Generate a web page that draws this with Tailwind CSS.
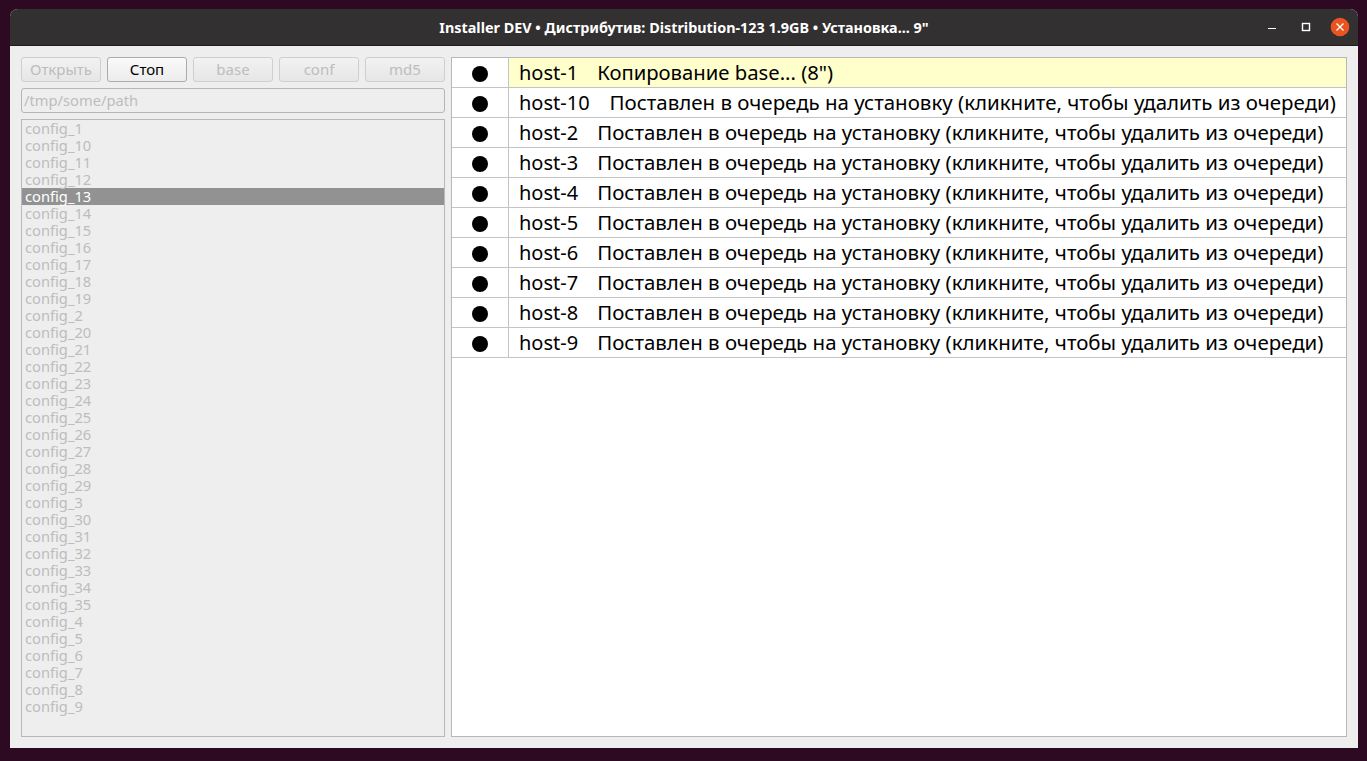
<!doctype html>
<html><head><meta charset="utf-8"><script src="https://cdn.jsdelivr.net/npm/@tailwindcss/browser@4"></script></head>
<body class="m-0 overflow-hidden">
<div class="w-[1367px] h-[761px] bg-[#2e0a22] pl-[10px] pt-[9px] font-['Noto_Sans',sans-serif]">
<div class="w-[1348px] h-[739px] flex flex-col bg-[#eeeeee] rounded-t-[8px] overflow-hidden">
 <div class="h-[37px] shrink-0 bg-[#323030] border-b border-[#1f1d1d] flex items-center relative">
  <div class="w-full text-center text-white font-bold text-[14.4px] mt-[2px]">Installer DEV • Дистрибутив: Distribution-123 1.9GB • Установка... 9"</div>
  <div class="absolute right-[8px] top-[8px] flex items-center">
   <svg width="100" height="20" viewBox="0 0 100 20"><path d="M18 11.5h8" stroke="#fff" stroke-width="1"/><rect x="52.5" y="6.5" width="7" height="7" fill="none" stroke="#fff" stroke-width="1.4"/><circle cx="90" cy="10" r="9.3" fill="#e95420"/><path d="M86.5 6.5l7 7M93.5 6.5l-7 7" stroke="#fff" stroke-width="1.3"/></svg>
  </div>
 </div>
 <div class="flex-1 flex gap-[6px] pl-[11px] pr-[11px] pt-[11px] pb-[11px]">
  <div class="w-[424px] flex flex-col gap-[6px]">
   <div class="flex gap-[6px] text-[15px] leading-none">
    <div class="w-[80px] h-[25px] flex items-center justify-center rounded-[3px] border border-[#cfcfcf] bg-linear-to-b from-[#f2f2f2] to-[#e6e6e6] text-[#bdbdbd]">Открыть</div>
    <div class="w-[80px] h-[25px] flex items-center justify-center rounded-[3px] border border-[#ababab] bg-linear-to-b from-[#fafafa] to-[#ececec] text-black">Стоп</div>
    <div class="w-[80px] h-[25px] flex items-center justify-center rounded-[3px] border border-[#cfcfcf] bg-linear-to-b from-[#f2f2f2] to-[#e6e6e6] text-[#bdbdbd]">base</div>
    <div class="w-[80px] h-[25px] flex items-center justify-center rounded-[3px] border border-[#cfcfcf] bg-linear-to-b from-[#f2f2f2] to-[#e6e6e6] text-[#bdbdbd]">conf</div>
    <div class="w-[80px] h-[25px] flex items-center justify-center rounded-[3px] border border-[#cfcfcf] bg-linear-to-b from-[#f2f2f2] to-[#e6e6e6] text-[#bdbdbd]">md5</div>
   </div>
   <div class="h-[25px] flex items-center rounded-[3px] border border-[#b5b5b5] px-[2px] text-[14.7px] text-[#bdbdbd] bg-[#eeeeee]">/tmp/some/path</div>
   <div class="flex-1 border border-[#b8b8b8] text-[14.7px] leading-[17px] text-[#bdbdbd]">
    <div class="h-[17px] px-[3px]">config_1</div><div class="h-[17px] px-[3px]">config_10</div><div class="h-[17px] px-[3px]">config_11</div><div class="h-[17px] px-[3px]">config_12</div>
    <div class="h-[17px] px-[3px] bg-[#929292] text-white">config_13</div>
    <div class="h-[17px] px-[3px]">config_14</div><div class="h-[17px] px-[3px]">config_15</div><div class="h-[17px] px-[3px]">config_16</div><div class="h-[17px] px-[3px]">config_17</div><div class="h-[17px] px-[3px]">config_18</div><div class="h-[17px] px-[3px]">config_19</div><div class="h-[17px] px-[3px]">config_2</div><div class="h-[17px] px-[3px]">config_20</div><div class="h-[17px] px-[3px]">config_21</div><div class="h-[17px] px-[3px]">config_22</div><div class="h-[17px] px-[3px]">config_23</div><div class="h-[17px] px-[3px]">config_24</div><div class="h-[17px] px-[3px]">config_25</div><div class="h-[17px] px-[3px]">config_26</div><div class="h-[17px] px-[3px]">config_27</div><div class="h-[17px] px-[3px]">config_28</div><div class="h-[17px] px-[3px]">config_29</div><div class="h-[17px] px-[3px]">config_3</div><div class="h-[17px] px-[3px]">config_30</div><div class="h-[17px] px-[3px]">config_31</div><div class="h-[17px] px-[3px]">config_32</div><div class="h-[17px] px-[3px]">config_33</div><div class="h-[17px] px-[3px]">config_34</div><div class="h-[17px] px-[3px]">config_35</div><div class="h-[17px] px-[3px]">config_4</div><div class="h-[17px] px-[3px]">config_5</div><div class="h-[17px] px-[3px]">config_6</div><div class="h-[17px] px-[3px]">config_7</div><div class="h-[17px] px-[3px]">config_8</div><div class="h-[17px] px-[3px]">config_9</div>
   </div>
  </div>
  <div class="w-[896px] bg-white border border-[#b8b8b8] text-[20px] leading-none text-black">
   <div class="h-[30px] flex border-b border-[#c4c4c4]"><div class="w-[57px] border-r border-[#c4c4c4] flex items-center justify-center"><div class="w-[16px] h-[16px] rounded-full bg-black mt-[3px]"></div></div><div class="flex-1 bg-[#ffffcc] flex items-center pl-[10px] gap-[19px] whitespace-nowrap"><span>host-1</span><span class="text-[20.25px]">Копирование base... (8")</span></div></div>
   <div class="h-[30px] flex border-b border-[#c4c4c4]"><div class="w-[57px] border-r border-[#c4c4c4] flex items-center justify-center"><div class="w-[16px] h-[16px] rounded-full bg-black mt-[3px]"></div></div><div class="flex-1 flex items-center pl-[10px] gap-[20px] whitespace-nowrap"><span>host-10</span><span class="text-[20.48px]">Поставлен в очередь на установку (кликните, чтобы удалить из очереди)</span></div></div>
   <div class="h-[30px] flex border-b border-[#c4c4c4]"><div class="w-[57px] border-r border-[#c4c4c4] flex items-center justify-center"><div class="w-[16px] h-[16px] rounded-full bg-black mt-[3px]"></div></div><div class="flex-1 flex items-center pl-[10px] gap-[19px] whitespace-nowrap"><span>host-2</span><span class="text-[20.48px]">Поставлен в очередь на установку (кликните, чтобы удалить из очереди)</span></div></div>
   <div class="h-[30px] flex border-b border-[#c4c4c4]"><div class="w-[57px] border-r border-[#c4c4c4] flex items-center justify-center"><div class="w-[16px] h-[16px] rounded-full bg-black mt-[3px]"></div></div><div class="flex-1 flex items-center pl-[10px] gap-[19px] whitespace-nowrap"><span>host-3</span><span class="text-[20.48px]">Поставлен в очередь на установку (кликните, чтобы удалить из очереди)</span></div></div>
   <div class="h-[30px] flex border-b border-[#c4c4c4]"><div class="w-[57px] border-r border-[#c4c4c4] flex items-center justify-center"><div class="w-[16px] h-[16px] rounded-full bg-black mt-[3px]"></div></div><div class="flex-1 flex items-center pl-[10px] gap-[19px] whitespace-nowrap"><span>host-4</span><span class="text-[20.48px]">Поставлен в очередь на установку (кликните, чтобы удалить из очереди)</span></div></div>
   <div class="h-[30px] flex border-b border-[#c4c4c4]"><div class="w-[57px] border-r border-[#c4c4c4] flex items-center justify-center"><div class="w-[16px] h-[16px] rounded-full bg-black mt-[3px]"></div></div><div class="flex-1 flex items-center pl-[10px] gap-[19px] whitespace-nowrap"><span>host-5</span><span class="text-[20.48px]">Поставлен в очередь на установку (кликните, чтобы удалить из очереди)</span></div></div>
   <div class="h-[30px] flex border-b border-[#c4c4c4]"><div class="w-[57px] border-r border-[#c4c4c4] flex items-center justify-center"><div class="w-[16px] h-[16px] rounded-full bg-black mt-[3px]"></div></div><div class="flex-1 flex items-center pl-[10px] gap-[19px] whitespace-nowrap"><span>host-6</span><span class="text-[20.48px]">Поставлен в очередь на установку (кликните, чтобы удалить из очереди)</span></div></div>
   <div class="h-[30px] flex border-b border-[#c4c4c4]"><div class="w-[57px] border-r border-[#c4c4c4] flex items-center justify-center"><div class="w-[16px] h-[16px] rounded-full bg-black mt-[3px]"></div></div><div class="flex-1 flex items-center pl-[10px] gap-[19px] whitespace-nowrap"><span>host-7</span><span class="text-[20.48px]">Поставлен в очередь на установку (кликните, чтобы удалить из очереди)</span></div></div>
   <div class="h-[30px] flex border-b border-[#c4c4c4]"><div class="w-[57px] border-r border-[#c4c4c4] flex items-center justify-center"><div class="w-[16px] h-[16px] rounded-full bg-black mt-[3px]"></div></div><div class="flex-1 flex items-center pl-[10px] gap-[19px] whitespace-nowrap"><span>host-8</span><span class="text-[20.48px]">Поставлен в очередь на установку (кликните, чтобы удалить из очереди)</span></div></div>
   <div class="h-[30px] flex border-b border-[#c4c4c4]"><div class="w-[57px] border-r border-[#c4c4c4] flex items-center justify-center"><div class="w-[16px] h-[16px] rounded-full bg-black mt-[3px]"></div></div><div class="flex-1 flex items-center pl-[10px] gap-[19px] whitespace-nowrap"><span>host-9</span><span class="text-[20.48px]">Поставлен в очередь на установку (кликните, чтобы удалить из очереди)</span></div></div>
  </div>
 </div>
</div>
</div>
</body></html>
